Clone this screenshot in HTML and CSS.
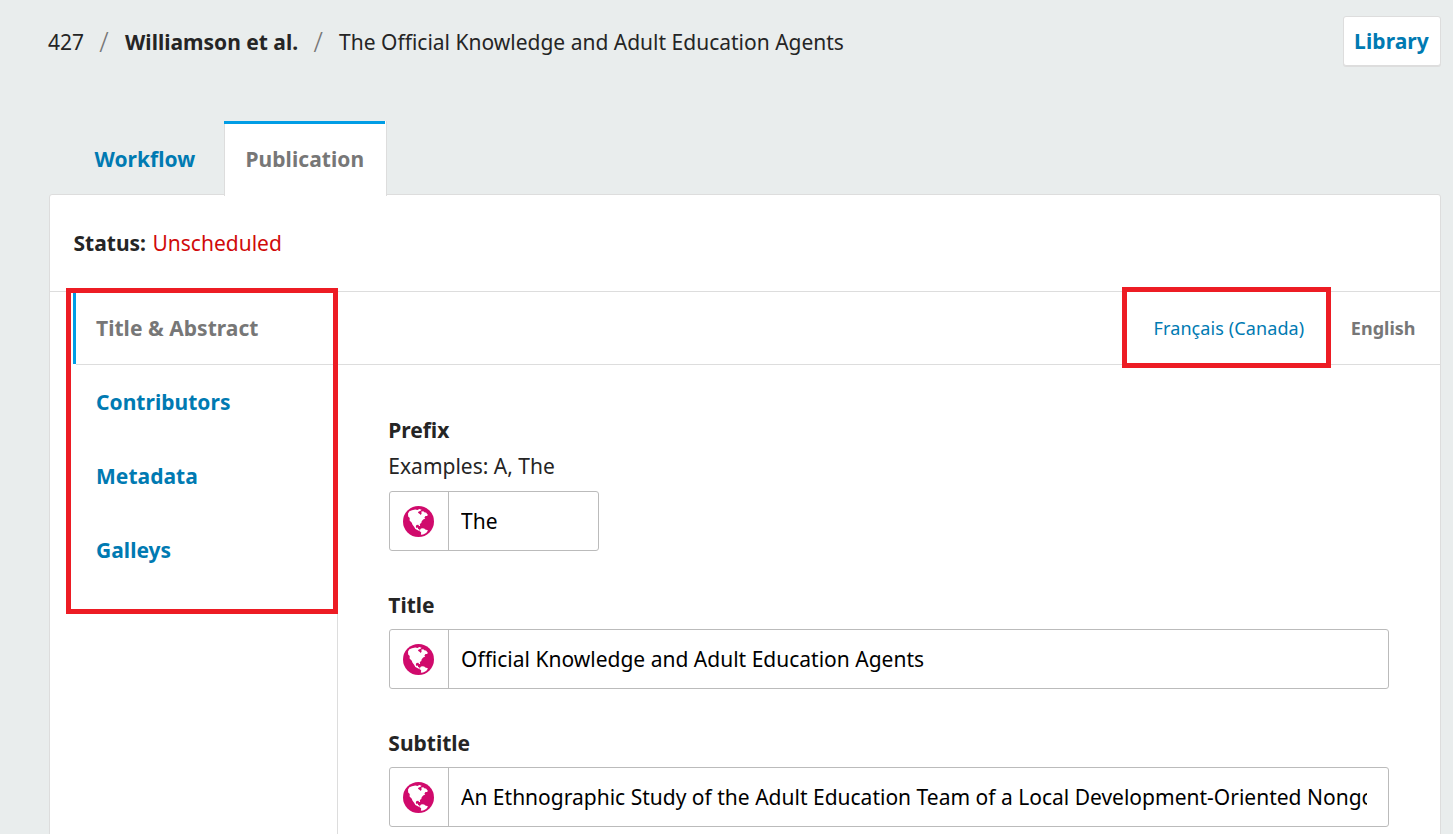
FILE: index.html
```html
<!DOCTYPE html>
<html lang="en">
<head>
<meta charset="utf-8">
<title>Publication</title>
<link rel="stylesheet" href="styles.css">
</head>
<body>
<svg class="sprite" width="0" height="0" aria-hidden="true">
  <symbol id="globe" viewBox="0 0 31 31">
    <circle cx="15.5" cy="15.5" r="15.5" fill="#d00a6c"/>
    <path fill="#fff" d="M5 7.6 6.4 5.2 9 4.2l3.3-.6 2.2.3 1.8-.8 2.3.6-1 1.1-2.2 1-.4 1 1.8 1.2 1 .9.8-1.4-.3-1.9 2-.3 1.5 1.3 1.2-.2 1.8 2.3-.6 1.2-1.7.2-1.1 1.4.8.9-2 1.1-1.5 1.7-.4 1.7-1.5 1.2.3 2-1-.1-.9-1.3-1.8.4-.6 1.6.7 1.2 1.4-.4.2 1.4 1.2.3.2 1.4 1.3.6-.6.4-2.4-1.3-2.4-1.3-1.3-2.2-1.7-2.2-.6-1.9-2.2-2.2.1-2.4-1.5-1.6z"/>
    <path fill="#fff" d="m17.4 23.1 1.5-.9 2.3.4 1.1 1 2.6.7-1 2-1.7 1.1-2.1 1.1-2.2.2.3-2.1-1.3-1.6z"/>
  </symbol>
</svg>
<header class="header">
  <nav class="crumbs">
    <span>427</span><span class="slash">/</span><strong>Williamson et al.</strong><span class="slash">/</span><span>The Official Knowledge and Adult Education Agents</span>
  </nav>
  <button class="library">Library</button>
</header>
<div class="tabs">
  <a class="tab">Workflow</a>
  <a class="tab tab-active">Publication</a>
</div>
<main class="panel">
  <div class="status"><strong>Status:</strong> <span class="unscheduled">Unscheduled</span></div>
  <div class="body">
    <nav class="side">
      <a class="side-item side-active">Title &amp; Abstract</a>
      <a class="side-item">Contributors</a>
      <a class="side-item">Metadata</a>
      <a class="side-item">Galleys</a>
      <div class="mark mark-side"></div>
    </nav>
    <section class="content">
      <div class="locales">
        <a class="locale">Français (Canada)</a>
        <span class="locale locale-active">English</span>
        <div class="mark mark-locale"></div>
      </div>
      <div class="form">
        <div class="group">
          <label class="label">Prefix</label>
          <div class="hint">Examples: A, The</div>
          <div class="field field-small">
            <span class="lead"><svg class="globe"><use href="#globe"/></svg></span>
            <div class="value">The</div>
          </div>
        </div>
        <div class="group">
          <label class="label">Title</label>
          <div class="field">
            <span class="lead"><svg class="globe"><use href="#globe"/></svg></span>
            <div class="value">Official Knowledge and Adult Education Agents</div>
          </div>
        </div>
        <div class="group">
          <label class="label">Subtitle</label>
          <div class="field">
            <span class="lead"><svg class="globe"><use href="#globe"/></svg></span>
            <div class="value">An Ethnographic Study of the Adult Education Team of a Local Development-Oriented Nongo</div>
          </div>
        </div>
      </div>
    </section>
  </div>
</main>
</body>
</html>
```
FILE: styles.css
```css
* { box-sizing: border-box; }
html, body { height: 100%; }
body {
  margin: 0;
  padding: 16px 12px 0 49px;
  overflow: hidden;
  background: #e9eded;
  color: #252525;
  font: 21px/30px "Noto Sans", sans-serif;
}
.sprite { position: absolute; }
.header { display: flex; justify-content: space-between; height: 105px; }
.crumbs { display: flex; height: 52px; align-items: center; margin-left: -1px; white-space: nowrap; }
.slash { width: 41px; padding-right: 1px; text-align: center; color: #777; font-size: 27px; font-weight: 300; }
.library {
  width: 98px;
  height: 50px;
  padding: 0 1px 0 0;
  border: 1px solid #ddd;
  border-radius: 3px;
  box-shadow: 0 1px 0 #ddd;
  background: #fff;
  color: #007ab2;
  font: inherit;
  font-weight: 700;
  letter-spacing: 0.08px;
}
.tabs { display: flex; height: 73px; padding-left: 24px; }
.tab { width: 151px; height: 75px; padding: 23px 0 0 21.5px; color: #007ab2; font-weight: 700; letter-spacing: 0.05px; }
.tab-active {
  position: relative;
  width: 163px;
  padding-left: 20.5px;
  border: 1px solid #ddd;
  border-width: 0 1px;
  background: #fff;
  color: #777;
}
.tab-active::before { content: ""; position: absolute; top: 0; left: -1px; right: 1px; height: 3px; background: #009de5; }
.panel { height: 660px; border: 1px solid #ddd; border-radius: 3px; background: #fff; }
.status { height: 97px; padding: 33px 23.5px 0; border-bottom: 1px solid #ddd; word-spacing: 1px; }
.unscheduled { color: #d00a0a; }
.body { display: flex; height: 561px; }
.side { position: relative; width: 288px; padding-left: 23px; border-right: 1px solid #ddd; }
.side-item { display: block; height: 74px; padding: 22px 0 0 23px; color: #007ab2; font-weight: 700; letter-spacing: 0.03px; }
.side-active { position: relative; height: 72px; margin-bottom: 1px; padding: 21px 0 0 20px; border-left: 3px solid #009de5; color: #777; }
.side-active::after { content: ""; position: absolute; left: 0; right: -1px; bottom: -1px; height: 1px; background: #ddd; }
.content { flex: 1; min-width: 0; }
.locales { position: relative; display: flex; justify-content: flex-end; align-items: center; gap: 46.6px; height: 73px; padding-right: 24.5px; border-bottom: 1px solid #ddd; font-size: 18px; }
.locale { color: #007ab2; letter-spacing: 0.1px; }
.locale-active { color: #777; font-weight: 700; letter-spacing: 0; }
.mark { position: absolute; border: 5px solid #ed1c24; }
.mark-side { left: 16px; top: -4px; width: 272px; height: 326px; }
.mark-locale { left: 784px; top: -5px; width: 209px; height: 81px; }
.form { padding: 50px 51px 0; }
.group { margin-bottom: 39px; }
.label { display: block; height: 39px; margin-left: -0.7px; font-weight: 700; }
.hint { height: 37px; margin: -3px 0 0 -0.7px; }
.group:first-child .field { margin-top: 3px; }
.field { display: flex; height: 60px; border: 1px solid #bbb; border-radius: 3px; background: #fff; color: #000; }
.field-small { width: 210px; }
.lead { display: flex; width: 59px; flex: none; align-items: center; padding-left: 13px; border-right: 1px solid #bbb; }
.globe { width: 31px; height: 31px; }
.value { flex: 1; min-width: 0; margin: 14px 21px 0 12px; height: 32px; overflow: hidden; white-space: nowrap; letter-spacing: 0.005px; }
```
